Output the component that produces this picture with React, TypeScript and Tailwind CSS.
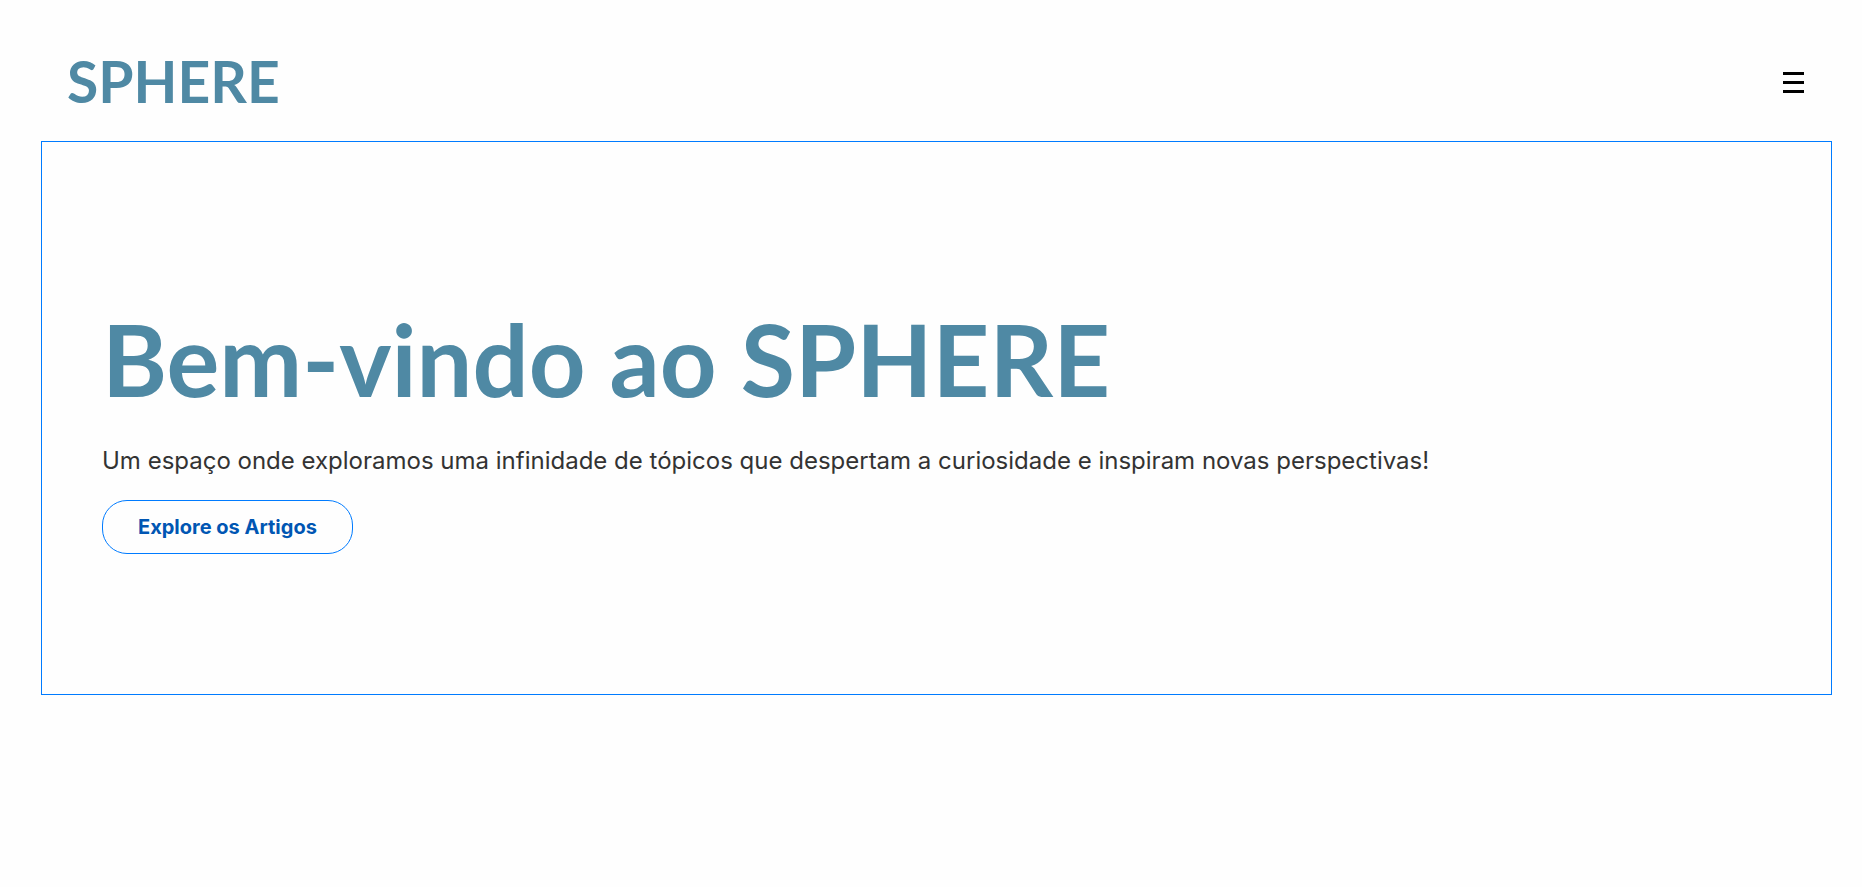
export default function App() {
  return (
    <div className="min-h-screen bg-[#fefefe] pr-[30px] pl-[41px] font-['Inter',sans-serif]">
      <header className="flex h-[141px] items-center justify-between pt-6 pr-7 pl-[26px]">
        <a href="#" className="pb-1 font-['Lato',sans-serif] text-[57px] leading-[72px] font-bold text-[#4f89a4]">
          SPHERE
        </a>
        <button type="button" aria-label="Menu" className="text-black">
          <svg width="21" height="21" viewBox="0 0 21 21" fill="currentColor" shapeRendering="crispEdges" aria-hidden="true">
            <rect width="21" height="3" />
            <rect y="9" width="21" height="3" />
            <rect y="18" width="21" height="3" />
          </svg>
        </button>
      </header>
      <main>
        <section className="flex flex-col items-start border border-[#007bff] px-15 py-[140px]">
          <h1 className="mb-2 font-['Lato',sans-serif] text-[99px] leading-[154px] font-bold text-[#4f89a4]">
            Bem-vindo ao SPHERE
          </h1>
          <p className="mb-[22px] text-[24px] leading-[34px] text-[#333333]">
            Um espaço onde exploramos uma infinidade de tópicos que despertam a curiosidade e inspiram novas
            perspectivas!
          </p>
          <a
            href="#"
            className="rounded-[25px] border border-[#007bff] px-[35px] py-3 text-[20px] leading-7 font-bold text-[#0056b3]"
          >
            Explore os Artigos
          </a>
        </section>
      </main>
    </div>
  );
}
